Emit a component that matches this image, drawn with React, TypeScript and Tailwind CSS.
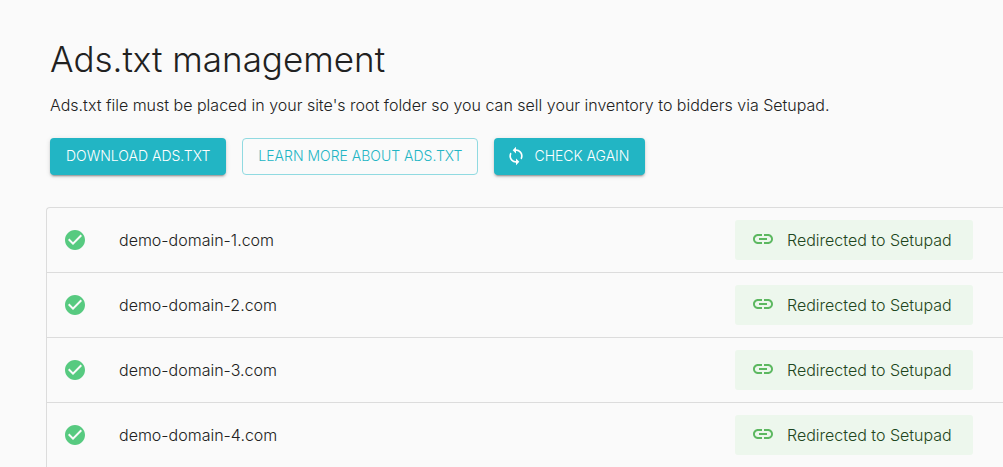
import React from "react";
import { MdCheckCircle, MdLink, MdLoop } from "react-icons/md";

const domains = ["demo-domain-1.com", "demo-domain-2.com", "demo-domain-3.com", "demo-domain-4.com"];

const raised =
  "flex h-[37px] items-center rounded bg-[#22b5c4] px-4 pb-px text-sm font-light text-white shadow-[0_3px_1px_-2px_rgba(0,0,0,0.2),0_2px_2px_0_rgba(0,0,0,0.14),0_1px_5px_0_rgba(0,0,0,0.12)]";

export default function App() {
  return (
    <main className="h-screen overflow-hidden bg-[#fafafa] pl-[46px] pt-10 font-['Inter',sans-serif] font-light text-[#212121]">
      <header className="pl-1">
        <h1 className="text-[35px] leading-[38px] font-light">Ads.txt management</h1>
        <p className="mt-[15px] text-base leading-6">
          Ads.txt file must be placed in your site's root folder so you can sell your inventory to bidders via Setupad.
        </p>
        <div className="mt-[21px] flex gap-4">
          <button type="button" className={raised}>DOWNLOAD ADS.TXT</button>
          <a href="#learn-more" className="flex h-[37px] items-center rounded border border-[#90dae1] px-[15px] pb-px text-sm text-[#22b5c4]">
            LEARN MORE ABOUT ADS.TXT
          </a>
          <button type="button" className={raised}>
            <MdLoop className="-ml-1 mr-2 size-5" />
            CHECK AGAIN
          </button>
        </div>
      </header>
      <ul className="mt-8 rounded-tl border-t border-l border-[#dcdcdc]">
        {domains.map((domain) => (
          <li key={domain} className="flex h-[65px] items-center border-b border-[#dcdcdc] pr-[30px] pl-4">
            <MdCheckCircle className="size-6 text-[#57ca80]" />
            <span className="ml-8 flex-1 text-base">{domain}</span>
            <span className="flex h-10 min-w-[238px] items-center rounded-[3px] bg-[#edf7ed] px-4 text-base text-[#1e4620]">
              <MdLink className="mr-3 mb-0.5 size-6 text-[#5cb860]" />
              Redirected to Setupad
            </span>
          </li>
        ))}
      </ul>
    </main>
  );
}
